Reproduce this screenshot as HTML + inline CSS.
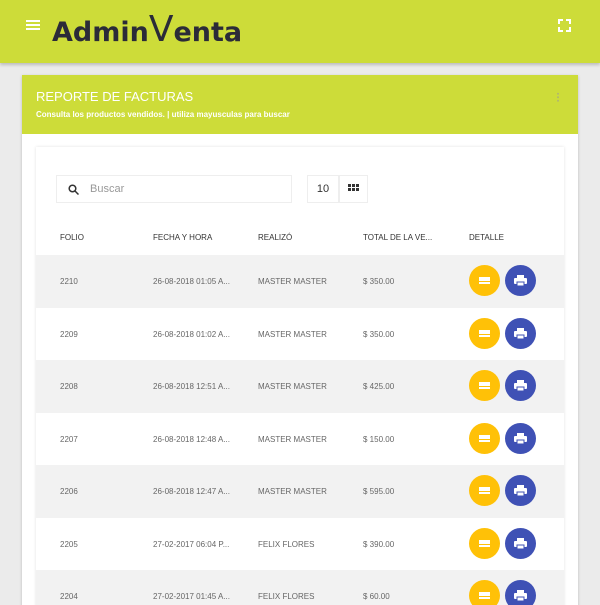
<!DOCTYPE html>
<html style="width:600px;height:605px;overflow:hidden"><head><meta charset="utf-8"><style>
*{margin:0;padding:0;box-sizing:border-box}
body{width:600px;height:605px;overflow:hidden;background:#ebebeb;font-family:"Liberation Sans",Arial,sans-serif;position:relative}
.top{position:absolute;left:0;top:0;width:600px;height:63px;background:#cddc39;box-shadow:0 2px 3px rgba(0,0,0,.2)}
.logo{position:absolute;left:52px;top:10px;font-size:27px;font-weight:bold;color:#2b2b38;font-family:"DejaVu Sans",sans-serif;line-height:40px;white-space:nowrap}
.card{position:absolute;left:22px;top:75px;width:556px;height:540px;background:#fff;box-shadow:0 1px 3px rgba(0,0,0,.2)}
.ch{height:59px;background:#cddc39;color:#fff;padding:14px 14px}
.ch h2{font-size:13px;font-weight:normal}
.ch p{font-size:8px;font-weight:bold;margin-top:6px}
.panel{position:absolute;left:14px;top:72px;width:528px;height:468px;background:#fff;box-shadow:0 0 3px rgba(0,0,0,.12)}
.search{position:absolute;left:20px;top:28px;width:236px;height:28px;border:1px solid #eee;font-size:11px;color:#999;padding:7px 0 0 33px}
.sel{position:absolute;top:28px;height:28px;border:1px solid #eee;font-size:11px;color:#333;text-align:center;padding-top:7px}
.row{position:absolute;left:0;width:528px;height:53px;font-size:8px;color:#666}
.row span,.hd span{position:absolute}
.hd{position:absolute;top:86px;font-size:8px;color:#333;width:528px}
.b{position:absolute;width:31px;height:31px;border-radius:50%;top:10px}
</style></head><body>
<div class="top">
<svg style="position:absolute;left:26px;top:19px" width="14" height="12"><rect y="1" width="14" height="2" fill="#fff"/><rect y="5" width="14" height="2" fill="#fff"/><rect y="9" width="14" height="2" fill="#fff"/></svg>
<div class="logo">Admin<span style="font-size:36px;font-weight:normal">V</span>enta</div>
<svg style="position:absolute;left:558px;top:19px" width="13" height="13" fill="none" stroke="#fff" stroke-width="2"><path d="M1 5V1h4M8 1h4v4M12 8v4H8M5 12H1V8"/></svg>
</div>
<div class="card">
<div class="ch"><h2>REPORTE DE FACTURAS</h2><p>Consulta los productos vendidos. | utiliza mayusculas para buscar</p>
<div style="position:absolute;right:19px;top:17px;width:2px;height:10px;background:radial-gradient(#999 40%,transparent 45%) 0 0/2px 3.5px"></div></div>
<div class="panel">
<div class="search">Buscar<svg style="position:absolute;left:11px;top:8px" width="11" height="11" fill="none" stroke="#333" stroke-width="1.5"><circle cx="4.5" cy="4.5" r="3.3"/><path d="M7 7l3.5 3.5"/></svg></div>
<div class="sel" style="left:271px;width:32px">10</div>
<div class="sel" style="left:303px;width:29px"><svg width="11" height="8" fill="#333"><rect width="3" height="3"/><rect x="4" width="3" height="3"/><rect x="8" width="3" height="3"/><rect y="4" width="3" height="3"/><rect x="4" y="4" width="3" height="3"/><rect x="8" y="4" width="3" height="3"/></svg></div>
<div class="hd"><span style="left:24px">FOLIO</span><span style="left:117px">FECHA Y HORA</span><span style="left:222px">REALIZÓ</span><span style="left:327px">TOTAL DE LA VE...</span><span style="left:433px">DETALLE</span></div>
</div>
</div>
<div id="rows" style="position:absolute;left:36px;top:255px;width:528px;height:350px;overflow:hidden"></div>
<script>
var d=[["2210","26-08-2018 01:05 A...","MASTER MASTER","$ 350.00"],["2209","26-08-2018 01:02 A...","MASTER MASTER","$ 350.00"],["2208","26-08-2018 12:51 A...","MASTER MASTER","$ 425.00"],["2207","26-08-2018 12:48 A...","MASTER MASTER","$ 150.00"],["2206","26-08-2018 12:47 A...","MASTER MASTER","$ 595.00"],["2205","27-02-2017 06:04 P...","FELIX FLORES","$ 390.00"],["2204","27-02-2017 01:45 A...","FELIX FLORES","$ 60.00"]];
var h="";d.forEach(function(r,i){h+='<div class="row" style="top:'+(i*52.5)+'px;background:'+(i%2?'#fff':'#f2f2f2')+'"><span style="left:24px;top:22px">'+r[0]+'</span><span style="left:117px;top:22px">'+r[1]+'</span><span style="left:222px;top:22px">'+r[2]+'</span><span style="left:327px;top:22px">'+r[3]+'</span><div class="b" style="left:433px;background:#ffc107"><div style="position:absolute;left:10px;top:12px;width:11px;height:7px;border-bottom:2px solid #fff;background:linear-gradient(#fff 0 4px,transparent 4px)"></div></div><div class="b" style="left:469px;background:#3f51b5"><svg style="position:absolute;left:9px;top:9px" width="13" height="13" fill="#fff"><rect x="3" y="1" width="7" height="3"/><rect x="0" y="4" width="13" height="6" rx="1"/><rect x="3" y="8" width="7" height="4" fill="#fff" stroke="#3f51b5" stroke-width="1"/></svg></div></div>'});
document.getElementById("rows").innerHTML=h;
</script>
</body></html>
